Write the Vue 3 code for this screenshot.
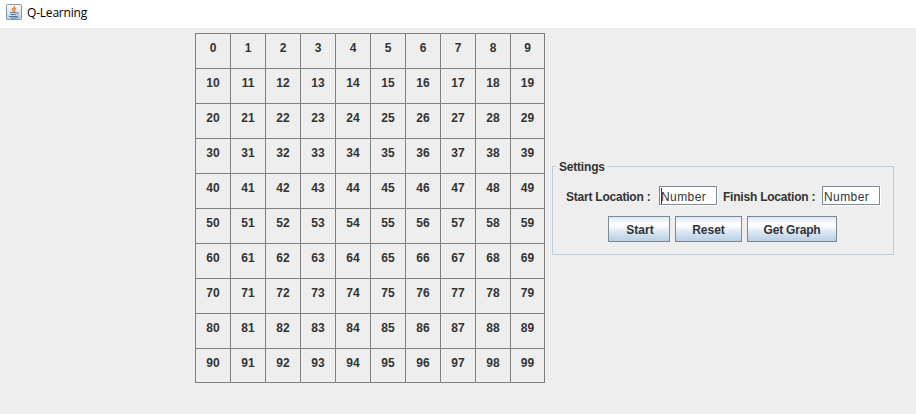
<script setup>
const cells = Array.from({ length: 100 }, (_, i) => i)
</script>

<template>
  <div class="window">
    <header class="titlebar">
      <svg class="icon" width="16" height="16" viewBox="0 0 16 16">
        <defs>
          <linearGradient id="tile" x1="0" y1="0" x2="0" y2="1">
            <stop offset="0" stop-color="#f8fafb" />
            <stop offset="0.5" stop-color="#e2e8ed" />
            <stop offset="1" stop-color="#b9c9d8" />
          </linearGradient>
        </defs>
        <rect x="0.5" y="0.5" width="15" height="15" rx="0.8" fill="url(#tile)" stroke="#8197ad" />
        <path d="M8.6 2C9.3 3.6 5.9 4.3 6.4 5.9C6.6 6.6 7.4 7 7.6 7.6M10.1 4.1C8.4 4.9 8 5.5 8.6 6.3C9 6.9 8.7 7.3 8.4 7.7" fill="none" stroke="#ee7b22" stroke-width="1.3" />
        <path d="M4 8.6H10.2M4.8 10.5H9.9M10.5 8.5C12.9 8 12.7 10 10.8 10.5M3 12.5H11.5M5.2 14C8.5 14.2 11.6 14 12.6 12.8" fill="none" stroke="#4c7ba5" stroke-width="1" />
      </svg>
      <span class="title">Q-Learning</span>
    </header>
    <main class="content">
      <div class="grid">
        <div v-for="n in cells" :key="n" class="cell">{{ n }}</div>
      </div>
      <section class="settings">
        <h2 class="legend"><span>Settings</span></h2>
        <div class="row fields">
          <span class="label start">Start Location :</span>
          <div class="field"><span class="caret"></span>Number</div>
          <span class="label finish">Finish Location :</span>
          <div class="field">Number</div>
        </div>
        <div class="row buttons">
          <button class="b-start">Start</button>
          <button class="b-reset">Reset</button>
          <button class="b-graph">Get Graph</button>
        </div>
      </section>
    </main>
  </div>
</template>

<style>
body { background: #eeeeee; }
</style>

<style scoped>
.window {
  width: 916px;
  height: 414px;
  overflow: hidden;
  background: #eeeeee;
  color: #333333;
  font: bold 12px/14px "Liberation Sans", Arial, sans-serif;
}
.titlebar {
  box-sizing: border-box;
  height: 28px;
  padding: 4px 6px 0;
  display: flex;
  gap: 5px;
  background: #ffffff;
}
.icon { flex: none; }
.title {
  font: 12px/18px "Open Sans", "Noto Sans", sans-serif;
  letter-spacing: -0.2px;
  color: #000000;
}
.content {
  display: flex;
  align-items: flex-start;
  padding: 5px 0 0 195px;
}
.grid {
  box-sizing: border-box;
  width: 350px;
  height: 350px;
  display: grid;
  grid-template-columns: repeat(9, 35px) 34px;
  grid-template-rows: repeat(9, 35px) 34px;
  border: solid #808080;
  border-width: 0 1px 1px 0;
}
.cell {
  border: solid #808080;
  border-width: 1px 0 0 1px;
  padding-top: 7px;
  text-align: center;
}
.settings {
  box-sizing: border-box;
  width: 342px;
  height: 89px;
  margin: 133px 0 0 7px;
  border: 1px solid #b8cfe5;
}
.legend {
  height: 14px;
  margin: -7px 0 0 3px;
  font: inherit;
}
.legend span {
  display: inline-block;
  width: 48px;
  padding-left: 3px;
  background: #eeeeee;
  letter-spacing: -0.2px;
}
.row { display: flex; }
.fields {
  padding: 12px 0 0 13px;
  align-items: center;
}
.start { width: 93px; }
.finish { width: 99px; margin-left: 6px; }
.label {
  padding-top: 2px;
  white-space: nowrap;
  letter-spacing: -0.22px;
}
.field {
  box-sizing: border-box;
  width: 58px;
  height: 19px;
  display: flex;
  padding-left: 1px;
  border: 1px solid #7a8a99;
  background: #ffffff;
  box-shadow: 1px 1px 0 #ffffff;
  font-weight: normal;
  line-height: 20px;
  letter-spacing: 0.42px;
}
.caret {
  width: 1px;
  height: 16px;
  margin: 1px -1px 0 0;
  background: #333333;
}
.buttons {
  padding: 11px 0 0 55px;
  gap: 5px;
}
button {
  box-sizing: border-box;
  height: 26px;
  padding: 1px 0 0;
  border: 1px solid #7a8a99;
  border-radius: 0;
  color: inherit;
  font: inherit;
  background: linear-gradient(#dde8f3 0%, #ffffff 30%, #ffffff 36%, #dde8f3 60%, #b8cfe5 100%);
}
.b-start { width: 62px; padding-left: 2px; }
.b-reset { width: 67px; }
.b-graph { width: 90px; letter-spacing: -0.2px; }
</style>
